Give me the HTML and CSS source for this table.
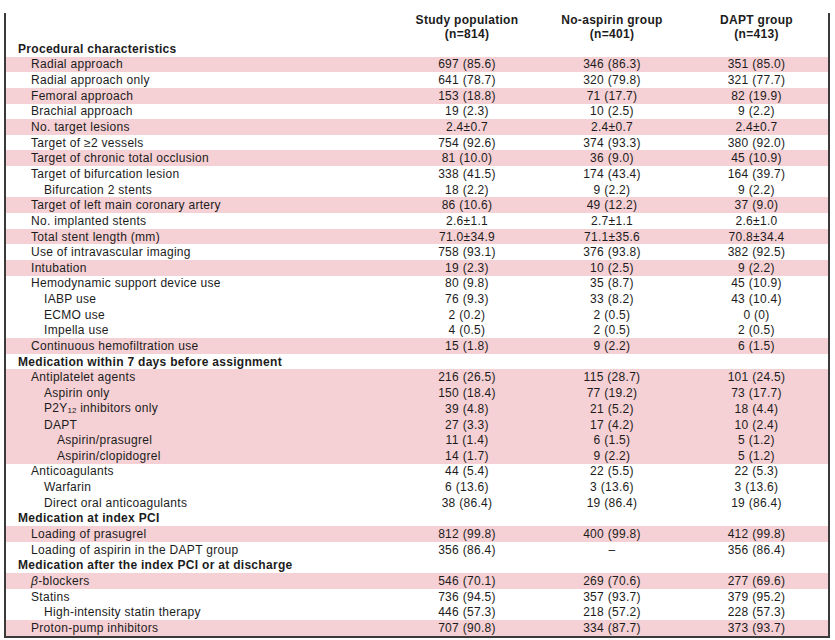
FILE: index.html
```html
<!DOCTYPE html>
<html>
<head>
<meta charset="utf-8">
<link rel="stylesheet" href="styles.css">
</head>
<body>
<div class="frame">
<table class="tbl">
<colgroup>
<col class="c-label"><col class="c-1"><col class="c-2"><col class="c-3">
</colgroup>
<thead>
<tr class="head">
<th></th>
<th>Study population<br>(n=814)</th>
<th>No-aspirin group<br>(n=401)</th>
<th>DAPT group<br>(n=413)</th>
</tr>
</thead>
<tbody>
<tr class="sec"><td colspan="4">Procedural characteristics</td></tr>
<tr class="pk"><td class="l1">Radial approach</td><td>697 (85.6)</td><td>346 (86.3)</td><td>351 (85.0)</td></tr>
<tr><td class="l1">Radial approach only</td><td>641 (78.7)</td><td>320 (79.8)</td><td>321 (77.7)</td></tr>
<tr class="pk"><td class="l1">Femoral approach</td><td>153 (18.8)</td><td>71 (17.7)</td><td>82 (19.9)</td></tr>
<tr><td class="l1">Brachial approach</td><td>19 (2.3)</td><td>10 (2.5)</td><td>9 (2.2)</td></tr>
<tr class="pk"><td class="l1">No. target lesions</td><td>2.4±0.7</td><td>2.4±0.7</td><td>2.4±0.7</td></tr>
<tr><td class="l1">Target of ≥2 vessels</td><td>754 (92.6)</td><td>374 (93.3)</td><td>380 (92.0)</td></tr>
<tr class="pk"><td class="l1">Target of chronic total occlusion</td><td>81 (10.0)</td><td>36 (9.0)</td><td>45 (10.9)</td></tr>
<tr><td class="l1">Target of bifurcation lesion</td><td>338 (41.5)</td><td>174 (43.4)</td><td>164 (39.7)</td></tr>
<tr><td class="l2">Bifurcation 2 stents</td><td>18 (2.2)</td><td>9 (2.2)</td><td>9 (2.2)</td></tr>
<tr class="pk"><td class="l1">Target of left main coronary artery</td><td>86 (10.6)</td><td>49 (12.2)</td><td>37 (9.0)</td></tr>
<tr><td class="l1">No. implanted stents</td><td>2.6±1.1</td><td>2.7±1.1</td><td>2.6±1.0</td></tr>
<tr class="pk"><td class="l1">Total stent length (mm)</td><td>71.0±34.9</td><td>71.1±35.6</td><td>70.8±34.4</td></tr>
<tr><td class="l1">Use of intravascular imaging</td><td>758 (93.1)</td><td>376 (93.8)</td><td>382 (92.5)</td></tr>
<tr class="pk"><td class="l1">Intubation</td><td>19 (2.3)</td><td>10 (2.5)</td><td>9 (2.2)</td></tr>
<tr><td class="l1">Hemodynamic support device use</td><td>80 (9.8)</td><td>35 (8.7)</td><td>45 (10.9)</td></tr>
<tr><td class="l2">IABP use</td><td>76 (9.3)</td><td>33 (8.2)</td><td>43 (10.4)</td></tr>
<tr><td class="l2">ECMO use</td><td>2 (0.2)</td><td>2 (0.5)</td><td>0 (0)</td></tr>
<tr><td class="l2">Impella use</td><td>4 (0.5)</td><td>2 (0.5)</td><td>2 (0.5)</td></tr>
<tr class="pk"><td class="l1">Continuous hemofiltration use</td><td>15 (1.8)</td><td>9 (2.2)</td><td>6 (1.5)</td></tr>
<tr class="sec"><td colspan="4">Medication within 7 days before assignment</td></tr>
<tr class="pk"><td class="l1">Antiplatelet agents</td><td>216 (26.5)</td><td>115 (28.7)</td><td>101 (24.5)</td></tr>
<tr class="pk"><td class="l2">Aspirin only</td><td>150 (18.4)</td><td>77 (19.2)</td><td>73 (17.7)</td></tr>
<tr class="pk"><td class="l2">P2Y<span class="sub">12</span> inhibitors only</td><td>39 (4.8)</td><td>21 (5.2)</td><td>18 (4.4)</td></tr>
<tr class="pk"><td class="l2">DAPT</td><td>27 (3.3)</td><td>17 (4.2)</td><td>10 (2.4)</td></tr>
<tr class="pk"><td class="l3">Aspirin/prasugrel</td><td>11 (1.4)</td><td>6 (1.5)</td><td>5 (1.2)</td></tr>
<tr class="pk"><td class="l3">Aspirin/clopidogrel</td><td>14 (1.7)</td><td>9 (2.2)</td><td>5 (1.2)</td></tr>
<tr><td class="l1">Anticoagulants</td><td>44 (5.4)</td><td>22 (5.5)</td><td>22 (5.3)</td></tr>
<tr><td class="l2">Warfarin</td><td>6 (13.6)</td><td>3 (13.6)</td><td>3 (13.6)</td></tr>
<tr><td class="l2">Direct oral anticoagulants</td><td>38 (86.4)</td><td>19 (86.4)</td><td>19 (86.4)</td></tr>
<tr class="sec"><td colspan="4">Medication at index PCI</td></tr>
<tr class="pk"><td class="l1">Loading of prasugrel</td><td>812 (99.8)</td><td>400 (99.8)</td><td>412 (99.8)</td></tr>
<tr><td class="l1">Loading of aspirin in the DAPT group</td><td>356 (86.4)</td><td>–</td><td>356 (86.4)</td></tr>
<tr class="sec"><td colspan="4">Medication after the index PCI or at discharge</td></tr>
<tr class="pk"><td class="l1"><i>β</i>-blockers</td><td>546 (70.1)</td><td>269 (70.6)</td><td>277 (69.6)</td></tr>
<tr><td class="l1">Statins</td><td>736 (94.5)</td><td>357 (93.7)</td><td>379 (95.2)</td></tr>
<tr><td class="l2">High-intensity statin therapy</td><td>446 (57.3)</td><td>218 (57.2)</td><td>228 (57.3)</td></tr>
<tr class="pk"><td class="l1">Proton-pump inhibitors</td><td>707 (90.8)</td><td>334 (87.7)</td><td>373 (93.7)</td></tr>
</tbody>
</table>
</div>
</body>
</html>
```
FILE: styles.css
```css
html, body {
  margin: 0;
  padding: 0;
  background: #ffffff;
}
body {
  font-family: "Liberation Sans", Arial, Helvetica, sans-serif;
  font-size: 12px;
  letter-spacing: 0.3px;
  color: #1c1c1c;
}
.frame {
  margin: 13px 0 0 4px;
  width: 822px;
  border-left: 2px solid #3a3a3a;
  border-right: 2px solid #3a3a3a;
  border-bottom: 2px solid #3a3a3a;
}
.tbl {
  width: 822px;
  table-layout: fixed;
  border-collapse: collapse;
  border-spacing: 0;
}
.c-label { width: 389px; }
.c-1 { width: 144px; }
.c-2 { width: 146px; }
.c-3 { width: 143px; }
.tbl td, .tbl th {
  padding: 0;
  white-space: nowrap;
  text-align: center;
  line-height: 13px;
}
.head th {
  font-weight: bold;
  height: 26.5px;
  vertical-align: top;
  padding-top: 1px;
  line-height: 13.5px;
}
.tbl tbody tr {
  height: 15.65px;
}
.tbl tbody td {
  height: 14.65px;
  vertical-align: middle;
  padding-top: 1px;
}
.tbl td.l1, .tbl td.l2, .tbl td.l3, .sec td {
  text-align: left;
}
.sec td {
  font-weight: bold;
  padding-left: 12px;
}
.l1 { padding-left: 25px !important; }
.l2 { padding-left: 38px !important; }
.l3 { padding-left: 51px !important; }
.pk { background: #f5d0d4; }
.sub {
  font-size: 8px;
  letter-spacing: 0;
  vertical-align: -1px;
}
```
